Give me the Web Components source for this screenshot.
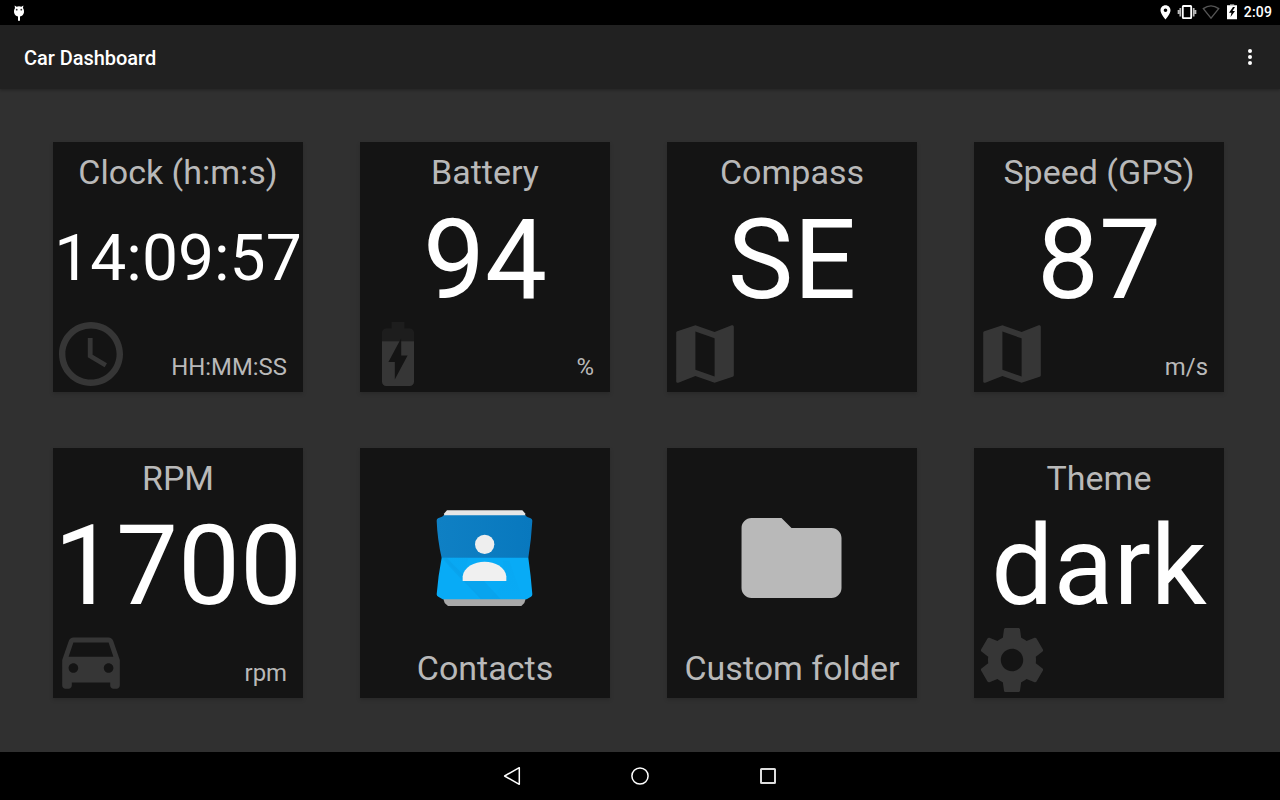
<!DOCTYPE html>
<html lang="en">
<head>
<meta charset="utf-8">
<title>Car Dashboard</title>
<style>
html,body{margin:0;height:100%;background:#303030;overflow:hidden}
body{font-family:Roboto,"Noto Sans",sans-serif;color:#fff}
</style>
</head>
<body>
<car-app></car-app>
<script>
const ICONS = {
  clock: '<path d="M11.99 2C6.47 2 2 6.48 2 12s4.47 10 9.99 10C17.52 22 22 17.52 22 12S17.52 2 11.99 2zM12 20c-4.42 0-8-3.58-8-8s3.58-8 8-8 8 3.58 8 8-3.58 8-8 8zm.5-13H11v6l5.25 3.15.75-1.23-4.5-2.67z"/>',
  battery: '<path fill-opacity=".3" d="M17 5.33C17 4.6 16.4 4 15.67 4H14V2h-4v2H8.33C7.6 4 7 4.6 7 5.33V8h5.47L13 7v1h4V5.33z"/><path d="M13 12.5h2L11 20v-5.5H9L12.47 8H7v12.67C7 21.4 7.6 22 8.33 22h7.33c.74 0 1.34-.6 1.34-1.33V8h-4v4.5z"/>',
  map: '<path d="M20.5 3l-.16.03L15 5.1 9 3 3.36 4.9c-.21.07-.36.25-.36.48V20.5c0 .28.22.5.5.5l.16-.03L9 18.9l6 2.1 5.64-1.9c.21-.07.36-.25.36-.48V3.5c0-.28-.22-.5-.5-.5zM15 19l-6-2.11V5l6 2.11V19z"/>',
  car: '<path d="M18.92 6.01C18.72 5.42 18.16 5 17.5 5h-11c-.66 0-1.21.42-1.42 1.01L3 12v8c0 .55.45 1 1 1h1c.55 0 1-.45 1-1v-1h12v1c0 .55.45 1 1 1h1c.55 0 1-.45 1-1v-8l-2.08-5.99zM6.5 16c-.83 0-1.5-.67-1.5-1.5S5.67 13 6.5 13s1.5.67 1.5 1.5S7.33 16 6.5 16zm11 0c-.83 0-1.5-.67-1.5-1.5s.67-1.5 1.5-1.5 1.5.67 1.5 1.5-.67 1.5-1.5 1.5zM5 11l1.5-4.5h11L19 11H5z"/>',
  gear: '<path d="M19.43 12.98c.04-.32.07-.64.07-.98s-.03-.66-.07-.98l2.11-1.65c.19-.15.24-.42.12-.64l-2-3.46c-.12-.22-.39-.3-.61-.22l-2.49 1c-.52-.4-1.08-.73-1.69-.98l-.38-2.65C14.46 2.18 14.25 2 14 2h-4c-.25 0-.46.18-.49.42l-.38 2.65c-.61.25-1.17.59-1.69.98l-2.49-1c-.23-.09-.49 0-.61.22l-2 3.46c-.13.22-.07.49.12.64l2.11 1.65c-.04.32-.07.65-.07.98s.03.66.07.98l-2.11 1.65c-.19.15-.24.42-.12.64l2 3.46c.12.22.39.3.61.22l2.49-1c.52.4 1.08.73 1.69.98l.38 2.65c.03.24.24.42.49.42h4c.25 0 .46-.18.49-.42l.38-2.65c.61-.25 1.17-.59 1.69-.98l2.49 1c.23.09.49 0 .61-.22l2-3.46c.12-.22.07-.49-.12-.64l-2.11-1.65zM12 15.5c-1.93 0-3.5-1.57-3.5-3.5s1.57-3.5 3.5-3.5 3.5 1.57 3.5 3.5-1.57 3.5-3.5 3.5z"/>'
};

function define(name, html) {
  customElements.define(name, class extends HTMLElement {
    constructor() {
      super();
      this.attachShadow({ mode: 'open' }).innerHTML = typeof html === 'function' ? html(this) : html;
    }
  });
}

define('status-bar', `
<style>
:host{display:flex;height:25px;background:#000;align-items:center;justify-content:space-between;box-sizing:border-box}
svg{display:block}
span{font-size:14px;font-weight:500;line-height:27px;letter-spacing:.15px}
.r{display:flex;align-items:center;padding-right:8px}
</style>
<svg width="38" height="25" viewBox="0 0 38 25"><path fill="#fff" d="M14.600 5.400l2 1.300q2.400-.8 4.800 0l2-1.300-.4 2.600q1.300 2 1 4.200-.8 3.800-4 4.200v4.400h-2v-4.400q-3.200-.4-4-4.200-.3-2.200 1-4.200z"/><g fill="#333"><circle cx="16.700" cy="9.700" r=".9"/><circle cx="21.300" cy="9.700" r=".9"/></g></svg>
<div class="r">
<svg width="84" height="25" viewBox="1160 0 84 25">
<path fill="#fff" fill-rule="evenodd" d="M1165.500 5.200c-2.800 0-5 2.200-5 5 0 3.600 5 9.300 5 9.300s5-5.700 5-9.300c0-2.800-2.200-5-5-5zm0 3.200a1.800 1.800 0 1 1 0 3.600 1.800 1.800 0 0 1 0-3.600z"/>
<g fill="none" stroke="#fff"><rect x="1182.800" y="6" width="8.400" height="12.200" rx=".6" stroke-width="1.800"/><path stroke="#bbb" stroke-width="1.700" d="M1180.300 8v8.500M1193.700 8v8.500M1178.500 10v4M1195.500 10v4"/></g>
<path fill="none" stroke="#555" stroke-width="1.300" d="M1203.300 8.600q7.700-5.600 15.400 0l-7.700 9.600z"/>
<path fill="#777" d="M1230 4h4.200v1.600h-4.200z"/><path fill="#fff" fill-rule="evenodd" d="M1227 5.300h10v14h-10zM1233 7l-4 5.800h2.500L1230.500 17l4.500-6h-2.500l2.500-4z"/>
</svg><span>2:09</span></div>`);

define('app-bar', `
<style>
:host{display:flex;height:64px;background:#212121;align-items:center;justify-content:space-between;padding:0 24px;box-shadow:0 1px 3px rgba(0,0,0,.3);box-sizing:border-box;position:relative}
h1{margin:2px 0 0;font-size:20px;font-weight:500;line-height:24px;letter-spacing:-.04px}
svg{display:block}
</style>
<h1><slot></slot></h1>
<svg width="12" height="20" viewBox="0 0 12 20" fill="#fff"><circle cx="6" cy="4" r="2"/><circle cx="6" cy="10" r="2"/><circle cx="6" cy="16" r="2"/></svg>`);

define('nav-bar', `
<style>:host{display:flex;height:48px;background:#000;align-items:center;justify-content:center;gap:104px}svg{display:block;fill:none;stroke:#fff;stroke-width:1.500}</style>
<svg width="24" height="24"><path stroke-linejoin="round" d="M4.600 12L19.300 3.700v16.600z"/></svg>
<svg width="24" height="24"><circle cx="12" cy="12" r="8.100"/></svg>
<svg width="24" height="24"><rect x="5" y="5" width="14" height="14" rx=".5" stroke="#ddd" stroke-width="2"/></svg>`);

define('gauge-tile', el => `
<style>
:host{display:grid;grid-template-rows:60px 117px 73px;grid-template-columns:250px;width:250px;height:250px;background:#141414;box-shadow:0 2px 4px rgba(0,0,0,.16)}
.t{font-size:34px;line-height:61px;text-align:center;color:#b9b9b9;white-space:nowrap}
.v{font-size:110.400px;line-height:118px;white-space:nowrap;display:flex;justify-content:center;font-kerning:none}
:host([small]) .v{font-size:64.200px;line-height:112px}
.f{display:flex;align-items:flex-end;justify-content:space-between;padding-right:16px}
.u{font-size:23.900px;line-height:50px;color:#b9b9b9}
svg{display:block;fill:#363636;flex:none}
</style>
<div class="t"><slot name="title"></slot></div>
<div class="v"><slot></slot></div>
<div class="f"><svg width="77" height="77" viewBox="0.125 -0.19 24.0625 24.0625">${ICONS[el.getAttribute('icon')]}</svg><div class="u"><slot name="unit"></slot></div></div>`);

define('shortcut-tile', `
<style>
:host{display:grid;grid-template-rows:220px 30px;width:250px;height:250px;background:#141414;box-shadow:0 2px 4px rgba(0,0,0,.16)}
.i{display:flex;align-items:center;justify-content:center}
.l{font-size:34px;line-height:61px;margin-top:-30px;text-align:center;color:#b9b9b9;white-space:nowrap}
</style>
<div class="i"><slot name="icon"></slot></div><div class="l"><slot></slot></div>`);

define('folder-icon', `
<style>:host,svg{display:block}</style>
<svg width="120" height="120" viewBox="0.1 0 24 24" fill="#b9b9b9"><path d="M10 4H4c-1.100 0-1.990.9-1.990 2L2 18c0 1.100.9 2 2 2h16c1.100 0 2-.9 2-2V8c0-1.100-.9-2-2-2h-8l-2-2z"/></svg>`);

define('contacts-icon', `
<style>:host,svg{display:block}</style>
<svg width="100" height="100" viewBox="105 54 300 300">
<defs>
<linearGradient id="a"><stop stop-color="#0f80c4"/><stop offset="1" stop-color="#0878be"/></linearGradient>
<linearGradient id="s" x1="0" y1="0" x2="0" y2="1"><stop stop-color="#0a98e0"/><stop offset="1" stop-color="#08a5f0"/></linearGradient>
</defs>
<path fill="#e6e6e6" d="M141 61h226l8 9 2 15H130l3-15z"/>
<path fill="#a9a9a9" d="M128 320h251l-6 19-9 9H144l-10-9z"/>
<path fill="url(#a)" d="M110 92q0-5 4-7l12-5 6-4h243l7 5 10 4q5 2 5 7-3 55-12 112H125Q112 147 110 92z"/>
<path fill="#08abf6" d="M125 203h260q8 56 12 110 0 5-4 7l-13 8H128l-13-8q-5-2-5-7 4-54 15-110z"/>
<path fill="url(#s)" d="M127 203h78l-15 68 52 55h26l50-54-10-60h20l40 114H250z" opacity=".15"/>
<path fill="#0a98e0" d="M127 206l61 66v-20l-48-49h-13zM190 273l52 54h60l-50-54z" opacity=".35"/>
<circle cx="254" cy="163" r="29" fill="#eee"/>
<path fill="#f0f0f0" d="M188 273v-14c3-28 35-44 66-44s62 16 65 44v14z"/>
</svg>`);

define('car-app', `
<style>
:host{display:flex;flex-direction:column;width:1280px;height:800px;background:#303030}
main{flex:1;display:grid;grid-template-columns:repeat(4,250px);grid-auto-rows:250px;gap:56px 57px;padding:53px 0 0 53px}
app-bar{flex:none}
</style>
<status-bar></status-bar>
<app-bar>Car Dashboard</app-bar>
<main>
<gauge-tile icon="clock" small><span slot="title">Clock (h:m:s)</span>14:09:57<span slot="unit">HH:MM:SS</span></gauge-tile>
<gauge-tile icon="battery"><span slot="title">Battery</span>94<span slot="unit">%</span></gauge-tile>
<gauge-tile icon="map"><span slot="title">Compass</span>SE</gauge-tile>
<gauge-tile icon="map"><span slot="title">Speed (GPS)</span>87<span slot="unit">m/s</span></gauge-tile>
<gauge-tile icon="car"><span slot="title">RPM</span>1700<span slot="unit">rpm</span></gauge-tile>
<shortcut-tile><contacts-icon slot="icon"></contacts-icon>Contacts</shortcut-tile>
<shortcut-tile><folder-icon slot="icon"></folder-icon>Custom folder</shortcut-tile>
<gauge-tile icon="gear"><span slot="title">Theme</span>dark</gauge-tile>
</main>
<nav-bar></nav-bar>`);
</script>
</body>
</html>
